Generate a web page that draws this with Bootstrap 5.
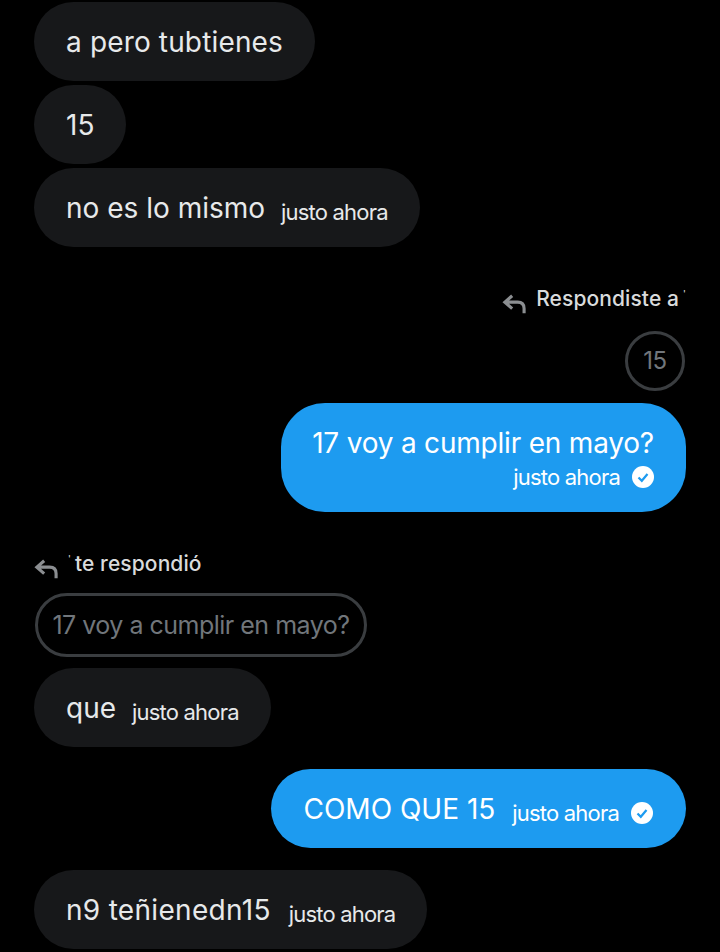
<!DOCTYPE html>
<html lang="es">
<head>
<meta charset="UTF-8">
<meta name="viewport" content="width=device-width, initial-scale=1.0">
<title>Chat</title>
<link href="https://cdn.jsdelivr.net/npm/bootstrap@5.3.0/dist/css/bootstrap.min.css" rel="stylesheet">
<style>
body { background: #000; font-family: Inter, Roboto, sans-serif; height: 952px; overflow: hidden; }
.chat-wrap { padding: 2px 34px 0 34px; }
.bubble { height: 79px; border-radius: 40px; padding: 0 32px; font-size: 28px; letter-spacing: 0; line-height: 1; white-space: nowrap; color: #e7e9ea; background: #17181a; margin-bottom: 4px; }
.bubble-out { background: #1d9bf0; color: #fff; }
.bubble-tall { height: 109px; border-radius: 44px; padding: 0 32px 0 31px; }
.bubble-loose { letter-spacing: .15px; }
.bubble-looser { letter-spacing: .3px; gap: 18px; }
.msg-time { font-size: 22px; letter-spacing: -.8px; transform: translateY(4px); }
.msg-time-low { transform: translateY(5px); }
.reply-head { font-size: 21px; font-weight: 500; letter-spacing: .1px; color: #d9dbdc; line-height: 26px; }
.reply-icon { width: 24px; height: 22px; margin-right: 10px; transform: translateY(5px); }
.name-speck { font-size: 9px; align-self: flex-start; line-height: 16px; color: #d9dbdc; }
.quote-circle { width: 60px; height: 60px; border: 3px solid #3a3d40; border-radius: 50%; color: #71767b; font-size: 24px; letter-spacing: -.5px; margin-right: 1px; }
.quote-pill { height: 64px; width: 332px; border: 3px solid #3a3d40; border-radius: 32px; color: #71767b; font-size: 25px; letter-spacing: -.5px; margin-left: 1px; padding-top: 1px; white-space: nowrap; }
.seen-icon { width: 22px; height: 22px; }
.gap-head { margin-top: 35px; }
.gap-circle { margin-top: 19px; }
.gap-tall { margin-top: 12px; }
.gap-pill { margin-top: 16px; }
.gap-small { margin-top: 11px; }
.gap-row { margin-top: 18px; }
.tall-text { transform: translateY(-4px); letter-spacing: -.2px; }
.out-row { padding-right: 33px; column-gap: 17px; }
</style>
</head>
<body>
<div class="chat-wrap d-flex flex-column">
    <div class="bubble bubble-loose align-self-start d-flex align-items-center">a pero tubtienes</div>
    <div class="bubble align-self-start d-flex align-items-center">15</div>
    <div class="bubble align-self-start d-flex align-items-center gap-3">no es lo mismo <span class="msg-time">justo ahora</span></div>

    <div class="reply-head d-flex align-self-end align-items-center gap-head">
        <svg class="reply-icon" viewBox="0 0 26 24" fill="none" stroke="#8b8e91" stroke-width="3.400"><path d="M11 3 3 10 11 17M3 10H17Q24 10 24 17V22"/></svg>
        <span>Respondiste a</span><span class="name-speck ms-1">'</span>
    </div>
    <div class="quote-circle align-self-end d-flex align-items-center justify-content-center gap-circle">15</div>
    <div class="bubble bubble-out bubble-tall align-self-end d-flex flex-column justify-content-center align-items-end gap-tall">
        <div class="tall-text">17 voy a cumplir en mayo?</div>
        <div class="msg-time msg-time-low d-flex align-items-center gap-2">justo ahora
            <svg class="seen-icon ms-1" viewBox="0 0 22 22"><circle cx="11" cy="11" r="11" fill="#fff"/><path d="M6.500 11.500 9.800 14.800 15.500 8" fill="none" stroke="#1d9bf0" stroke-width="2.200"/></svg>
        </div>
    </div>

    <div class="reply-head d-flex align-self-start align-items-center gap-head">
        <svg class="reply-icon" viewBox="0 0 26 24" fill="none" stroke="#8b8e91" stroke-width="3.400"><path d="M11 3 3 10 11 17M3 10H17Q24 10 24 17V22"/></svg>
        <span class="name-speck">'</span><span class="ms-1">te respondió</span>
    </div>
    <div class="quote-pill align-self-start d-flex align-items-center justify-content-center gap-pill">17 voy a cumplir en mayo?</div>
    <div class="bubble align-self-start d-flex align-items-center gap-3 gap-small">que <span class="msg-time">justo ahora</span></div>

    <div class="bubble bubble-out out-row align-self-end d-flex align-items-center gap-row">COMO QUE 15
        <span class="msg-time d-flex align-items-center gap-2">justo ahora
            <svg class="seen-icon ms-1" viewBox="0 0 22 22"><circle cx="11" cy="11" r="11" fill="#fff"/><path d="M6.500 11.500 9.800 14.800 15.500 8" fill="none" stroke="#1d9bf0" stroke-width="2.200"/></svg>
        </span>
    </div>

    <div class="bubble bubble-looser align-self-start d-flex align-items-center gap-row">n9 teñienedn15 <span class="msg-time">justo ahora</span></div>
</div>
<script src="https://cdn.jsdelivr.net/npm/bootstrap@5.3.0/dist/js/bootstrap.bundle.min.js"></script>
</body>
</html>
